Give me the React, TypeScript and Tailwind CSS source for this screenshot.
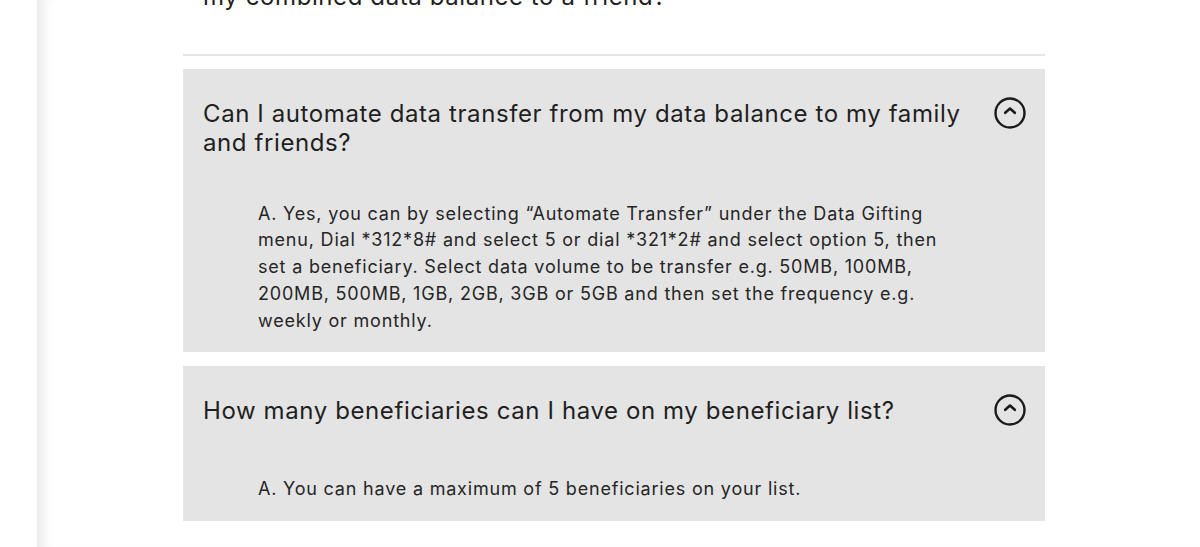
import { ReactNode } from 'react';

interface Faq {
  id: string;
  question: string;
  answer: string;
}

const faqs: Faq[] = [
  {
    id: 'automate',
    question: 'Can I automate data transfer from my data balance to my family and friends?',
    answer:
      'A. Yes, you can by selecting \u201cAutomate Transfer\u201d under the Data Gifting menu, Dial *312*8# and select 5 or dial *321*2# and select option 5, then set a beneficiary. Select data volume to be transfer e.g. 50MB, 100MB, 200MB, 500MB, 1GB, 2GB, 3GB or 5GB and then set the frequency e.g. weekly or monthly.',
  },
  {
    id: 'beneficiaries',
    question: 'How many beneficiaries can I have on my beneficiary list?',
    answer: 'A. You can have a maximum of 5 beneficiaries on your list.',
  },
];

function ChevronCircle() {
  return (
    <svg width="32" height="32" viewBox="0 0 32 32" fill="none" className="shrink-0">
      <circle cx="16" cy="16" r="14.5" stroke="#1a1a1a" strokeWidth="2.4" />
      <path d="M11.2 15.8 L16 11.6 L20.8 15.8" stroke="#1a1a1a" strokeWidth="2.6" strokeLinecap="round" strokeLinejoin="round" />
    </svg>
  );
}

function FaqItem({ faq }: { faq: Faq }): ReactNode {
  return (
    <div className="bg-[#e4e4e4] px-5 pt-[30px] pb-[18px]">
      <div className="flex items-start justify-between gap-5 min-h-[37px]">
        <h3 className="text-[24px] leading-[29.5px] tracking-[0.6px] text-[#1f1f1f]">{faq.question}</h3>
        <div className="-mt-[2px] -mr-[1px]">
          <ChevronCircle />
        </div>
      </div>
      <p className="mt-[43px] pl-[55px] pr-[55px] text-[18px] leading-[26.75px] tracking-[0.8px] text-[#262626]">
        {faq.answer}
      </p>
    </div>
  );
}

export default function App() {
  return (
    <div
      className="h-[547px] overflow-hidden bg-white pl-[37px]"
      style={{ fontFamily: 'Inter, "Liberation Sans", sans-serif' }}
    >
      <div className="flex h-full flex-col bg-white shadow-[inset_14px_0_12px_-8px_rgba(0,0,0,0.09)] pl-[146px] pr-[155px]">
        {/* collapsed item above, scrolled partly out of view */}
        <div className="-mt-[18px] border-b-2 border-[#e6e6e6] px-5 pb-[42px]">
          <h3 className="text-[24px] leading-[29.5px] tracking-[0.6px] text-[#1f1f1f]">
            my combined data balance to a friend?
          </h3>
        </div>

        <div className="mt-[13px] flex flex-col gap-[14px]">
          {faqs.map((faq) => (
            <FaqItem key={faq.id} faq={faq} />
          ))}
        </div>
      </div>
    </div>
  );
}
